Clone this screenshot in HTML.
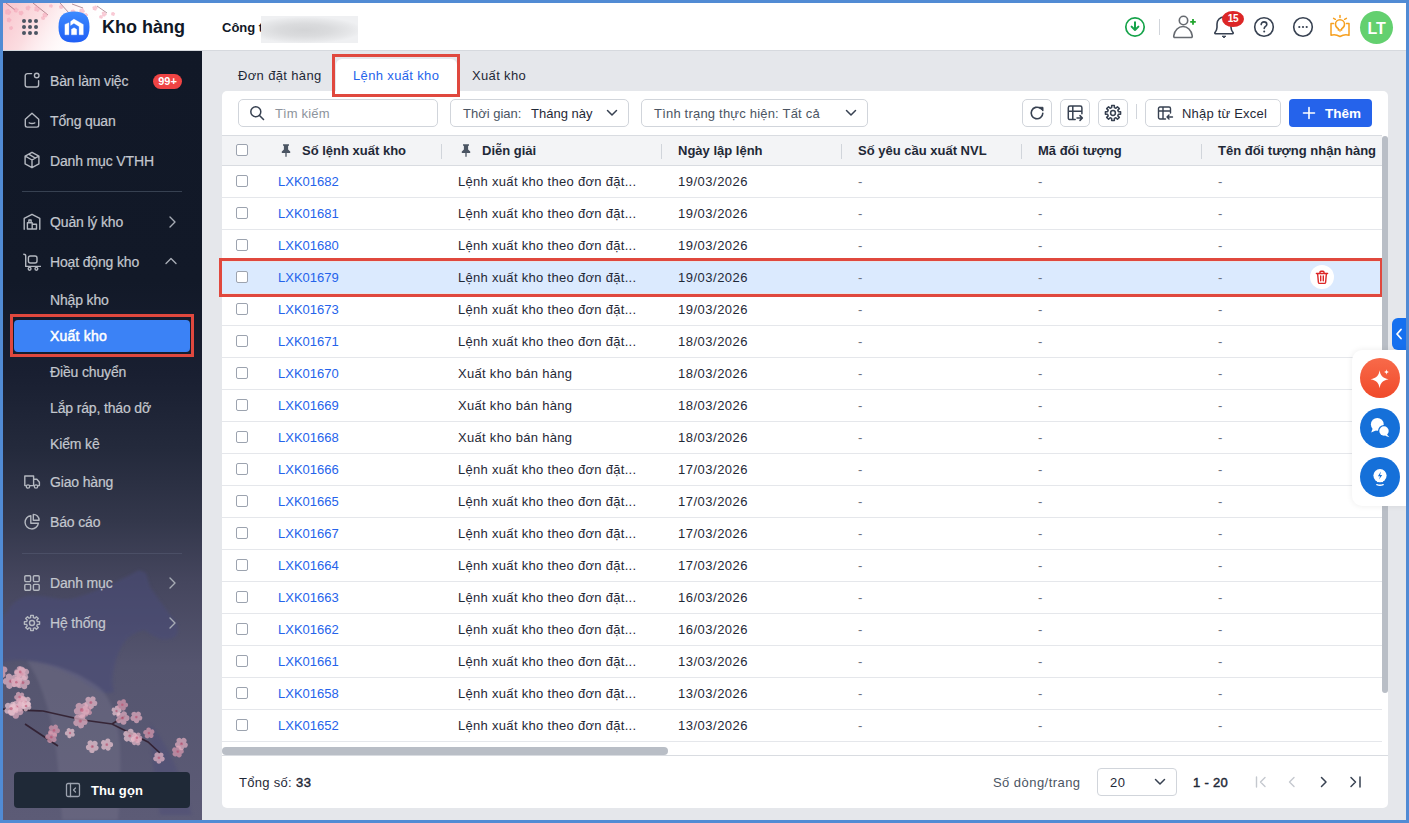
<!DOCTYPE html>
<html><head><meta charset="utf-8">
<style>
*{box-sizing:border-box;margin:0;padding:0}
html,body{width:1409px;height:823px;overflow:hidden;background:#518bd4;font-family:"Liberation Sans",sans-serif;position:relative}
.a{position:absolute;white-space:nowrap}
#header{position:absolute;left:3px;top:3px;width:1403px;height:48px;background:#fff;border-bottom:1px solid #d6d9de;overflow:hidden}
#sidebar{position:absolute;left:3px;top:51px;width:199px;height:769px;background:linear-gradient(180deg,#111827 0%,#121928 30%,#191f31 42%,#242a3c 52%,#33374b 61%,#45465e 69%,#55556f 80%,#5c5b76 100%);overflow:hidden}
#content{position:absolute;left:202px;top:51px;width:1204px;height:769px;background:#e5e7eb}
.mi{position:absolute;left:47px;color:#c3c7ce;font-size:14px;white-space:nowrap;line-height:16px;letter-spacing:-.15px;-webkit-text-stroke:.2px #c3c7ce}
.ic{position:absolute;left:21px}
.card{position:absolute;left:222px;top:91px;width:1166px;height:717px;background:#fff;border-radius:5px}
.box{position:absolute;border:1px solid #d1d5db;border-radius:5px;background:#fff;height:28px;top:99px}
.tbl{position:absolute;left:222px;top:135px;width:1160px;height:607px;overflow:hidden}
.th{position:absolute;left:0;top:0;width:1160px;height:31px;background:#f3f4f6;border-top:1px solid #d9dce1;border-bottom:1px solid #d9dce1}
.th .c{position:absolute;top:7px;font-size:13px;font-weight:bold;color:#1f2937;white-space:nowrap}
.th .sep{position:absolute;top:8px;width:1px;height:15px;background:#d1d5db}
.row{position:absolute;left:222px;width:1160px;height:32px;border-bottom:1px solid #e5e7eb;font-size:13px;color:#1f2937;background:#fff}
.row.hl{background:#dbeafe}
.row .c{position:absolute;top:8px;white-space:nowrap;line-height:16px}
.row .d{color:#6b7280}
.cb{position:absolute;left:14px;top:9px;width:12px;height:12px;border:1px solid #9ca3af;border-radius:2px;background:#fff}
.lnk{color:#2563eb}
.trash{position:absolute;left:1088px;top:3px;width:24px;height:24px;border-radius:50%;background:#fff}
.trash svg{position:absolute;left:5px;top:5px}
.tab{font-size:13px;color:#1f2937;line-height:16px;letter-spacing:0.35px}
.ph{font-size:13px;line-height:16px}
.ft{font-size:13px;line-height:16px;color:#1f2937}
.ft b{font-weight:bold}
.ds{letter-spacing:.3px}
.dt{letter-spacing:.5px}

</style></head><body>
<div id="header">
  <svg class="a" style="left:0;top:0" width="130" height="47" viewBox="0 0 130 47">
    <defs>
      <linearGradient id="pk" gradientUnits="userSpaceOnUse" x1="0" y1="0" x2="78" y2="47"><stop offset="0" stop-color="#f8c4cc"/><stop offset="0.4" stop-color="#fbdde1"/><stop offset="1" stop-color="#fff" stop-opacity="0"/></linearGradient>
    </defs>
    <rect x="0" y="0" width="130" height="47" fill="url(#pk)"/>
    <path d="M3 0 L12 7 M30 0 L45 12 M57 0 L66 10 M69 1 L80 5 M94 3 L104 10" stroke="#6b2c3c" stroke-width="0.9" fill="none" opacity="0.55"/>
    <g fill="#f4a6b8" opacity="0.6"><circle cx="5.2" cy="7.3" r="1.5"/><circle cx="6.8" cy="8.9" r="1.5"/><circle cx="5.7" cy="10.6" r="1.5"/><circle cx="3.6" cy="10.0" r="1.5"/><circle cx="3.6" cy="7.9" r="1.5"/></g><g fill="#f4a6b8" opacity="0.6"><circle cx="13.0" cy="5.6" r="1.2"/><circle cx="14.4" cy="6.6" r="1.2"/><circle cx="13.3" cy="8.4" r="1.2"/><circle cx="12.0" cy="8.0" r="1.2"/><circle cx="11.7" cy="6.4" r="1.2"/></g><g fill="#f4a6b8" opacity="0.6"><circle cx="18.7" cy="8.9" r="1.2"/><circle cx="19.3" cy="9.9" r="1.2"/><circle cx="18.2" cy="11.3" r="1.2"/><circle cx="17.0" cy="10.8" r="1.2"/><circle cx="16.9" cy="9.2" r="1.2"/></g><g fill="#f4a6b8" opacity="0.6"><circle cx="6.1" cy="15.7" r="1.2"/><circle cx="7.3" cy="17.0" r="1.2"/><circle cx="6.2" cy="18.3" r="1.2"/><circle cx="5.0" cy="17.8" r="1.2"/><circle cx="5.0" cy="16.1" r="1.2"/></g><g fill="#f4a6b8" opacity="0.6"><circle cx="25.5" cy="3.8" r="1.2"/><circle cx="26.3" cy="4.6" r="1.2"/><circle cx="25.3" cy="6.3" r="1.2"/><circle cx="23.9" cy="5.8" r="1.2"/><circle cx="23.8" cy="4.4" r="1.2"/></g><g fill="#f4a6b8" opacity="0.6"><circle cx="34.0" cy="4.4" r="1.4"/><circle cx="35.6" cy="6.2" r="1.4"/><circle cx="34.6" cy="7.5" r="1.4"/><circle cx="32.6" cy="6.9" r="1.4"/><circle cx="32.8" cy="4.8" r="1.4"/></g><g fill="#f4a6b8" opacity="0.6"><circle cx="42.5" cy="10.7" r="1.2"/><circle cx="43.4" cy="12.2" r="1.2"/><circle cx="42.6" cy="13.3" r="1.2"/><circle cx="40.8" cy="12.7" r="1.2"/><circle cx="40.8" cy="11.3" r="1.2"/></g><g fill="#f4a6b8" opacity="0.6"><circle cx="40.5" cy="14.0" r="1.0"/><circle cx="41.1" cy="15.2" r="1.0"/><circle cx="40.6" cy="15.9" r="1.0"/><circle cx="39.3" cy="15.8" r="1.0"/><circle cx="39.0" cy="14.5" r="1.0"/></g><g fill="#f4a6b8" opacity="0.6"><circle cx="8.5" cy="24.0" r="1.0"/><circle cx="9.1" cy="24.9" r="1.0"/><circle cx="8.3" cy="26.1" r="1.0"/><circle cx="7.2" cy="25.8" r="1.0"/><circle cx="7.1" cy="24.4" r="1.0"/></g><g fill="#f4a6b8" opacity="0.6"><circle cx="70.3" cy="7.6" r="1.2"/><circle cx="71.4" cy="8.8" r="1.2"/><circle cx="70.5" cy="10.4" r="1.2"/><circle cx="68.9" cy="9.9" r="1.2"/><circle cx="69.0" cy="8.0" r="1.2"/></g><g fill="#f4a6b8" opacity="0.6"><circle cx="79.5" cy="6.6" r="1.3"/><circle cx="80.5" cy="8.3" r="1.3"/><circle cx="79.3" cy="9.5" r="1.3"/><circle cx="77.6" cy="8.6" r="1.3"/><circle cx="77.8" cy="7.0" r="1.3"/></g><g fill="#f4a6b8" opacity="0.6"><circle cx="83.1" cy="10.9" r="1.0"/><circle cx="84.1" cy="12.1" r="1.0"/><circle cx="83.1" cy="13.1" r="1.0"/><circle cx="82.0" cy="12.5" r="1.0"/><circle cx="82.1" cy="11.4" r="1.0"/></g><g fill="#f4a6b8" opacity="0.6"><circle cx="92.5" cy="3.7" r="1.2"/><circle cx="93.4" cy="4.7" r="1.2"/><circle cx="92.3" cy="6.4" r="1.2"/><circle cx="90.9" cy="5.9" r="1.2"/><circle cx="90.7" cy="4.4" r="1.2"/></g><g fill="#f4a6b8" opacity="0.6"><circle cx="101.0" cy="9.6" r="1.2"/><circle cx="102.4" cy="11.2" r="1.2"/><circle cx="101.2" cy="12.4" r="1.2"/><circle cx="100.1" cy="12.1" r="1.2"/><circle cx="99.9" cy="10.0" r="1.2"/></g><g fill="#f4a6b8" opacity="0.6"><circle cx="110.2" cy="9.9" r="1.0"/><circle cx="111.1" cy="10.7" r="1.0"/><circle cx="110.5" cy="12.0" r="1.0"/><circle cx="109.1" cy="11.6" r="1.0"/><circle cx="109.2" cy="10.2" r="1.0"/></g><g fill="#f4a6b8" opacity="0.6"><circle cx="98.0" cy="13.0" r="0.9"/><circle cx="99.0" cy="14.0" r="0.9"/><circle cx="98.6" cy="14.8" r="0.9"/><circle cx="97.2" cy="14.5" r="0.9"/><circle cx="97.1" cy="13.5" r="0.9"/></g><g fill="#f4a6b8" opacity="0.6"><circle cx="72.5" cy="13.0" r="1.0"/><circle cx="73.1" cy="14.2" r="1.0"/><circle cx="72.4" cy="15.0" r="1.0"/><circle cx="71.0" cy="14.4" r="1.0"/><circle cx="71.0" cy="13.5" r="1.0"/></g><g fill="#f4a6b8" opacity="0.6"><circle cx="58.0" cy="2.9" r="1.0"/><circle cx="59.1" cy="4.0" r="1.0"/><circle cx="58.6" cy="4.9" r="1.0"/><circle cx="57.3" cy="4.8" r="1.0"/><circle cx="57.0" cy="3.4" r="1.0"/></g><g fill="#f4a6b8" opacity="0.6"><circle cx="48.3" cy="2.1" r="0.9"/><circle cx="49.0" cy="2.8" r="0.9"/><circle cx="48.6" cy="3.8" r="0.9"/><circle cx="47.1" cy="3.5" r="0.9"/><circle cx="47.1" cy="2.5" r="0.9"/></g>
  </svg>
  <svg class="a" style="left:19px;top:16px" width="18" height="18" viewBox="0 0 18 18"><g fill="#4b5563"><circle cx="2" cy="2" r="2"/><circle cx="8" cy="2" r="2"/><circle cx="14" cy="2" r="2"/><circle cx="2" cy="8" r="2"/><circle cx="8" cy="8" r="2"/><circle cx="14" cy="8" r="2"/><circle cx="2" cy="14" r="2"/><circle cx="8" cy="14" r="2"/><circle cx="14" cy="14" r="2"/></g></svg>
  <svg class="a" style="left:55px;top:8px" width="32" height="32" viewBox="0 0 32 32">
    <defs><linearGradient id="lg" x1="0" y1="0" x2="0" y2="1"><stop offset="0" stop-color="#3d8bff"/><stop offset="1" stop-color="#1f5ef5"/></linearGradient></defs>
    <path d="M16 0.5C27 0.5 31.5 5 31.5 16S27 31.5 16 31.5 0.5 27 0.5 16 5 0.5 16 0.5Z" fill="url(#lg)"/>
    <path d="M6.9 13.4l4-1.7v12.1h-4z M12.6 10.6l3.3-2.5 9.4 5.3v10.4h-4.2v-8.4l-5.2-3.2-3.3 2.2z M13.4 18.3l2.65-1.6 2.65 1.6v5.5h-5.3z" fill="#fff" stroke="#fff" stroke-width="0.3" stroke-linejoin="round"/>
  </svg>
  <span class="a" style="left:99px;top:13px;font-size:18px;font-weight:bold;color:#111827;line-height:22px">Kho hàng</span>
  <span class="a" style="left:219px;top:17px;font-size:13px;font-weight:bold;color:#111827;line-height:16px">Công t</span>
  <div class="a" style="left:258px;top:13px;width:97px;height:27px;background:radial-gradient(ellipse 60% 50% at 45% 52%,#d3d4d6 0%,#dadbdd 45%,#e6e7e9 80%,#eff0f2 100%)"></div>
  <!-- right icons -->
  <svg class="a" style="left:1121px;top:13px" width="22" height="22" viewBox="0 0 22 22"><circle cx="11" cy="11" r="9.2" fill="none" stroke="#16a34a" stroke-width="1.7"/><path d="M11 6.3v7.6M7.6 10.6L11 14l3.4-3.4" fill="none" stroke="#16a34a" stroke-width="2" stroke-linecap="round" stroke-linejoin="round"/></svg>
  <div class="a" style="left:1156px;top:16px;width:1px;height:16px;background:#d1d5db"></div>
  <svg class="a" style="left:1164px;top:8px" width="30" height="28" viewBox="0 0 30 28"><circle cx="16.5" cy="9.5" r="4.2" fill="none" stroke="#666a70" stroke-width="1.6"/><path d="M8 26.5C7 26.5 6.5 25.7 6.8 24.6 7.7 19.2 11.5 15.5 16 15.5s8.3 3.7 9.2 9.1c.3 1.1-.2 1.9-1.2 1.9z" fill="none" stroke="#666a70" stroke-width="1.6"/><path d="M26 8.1v5.6M23.2 10.9h5.6" stroke="#22a52e" stroke-width="1.8"/></svg>
  <svg class="a" style="left:1209px;top:11px" width="24" height="26" viewBox="0 0 24 26"><path d="M3.5 19.7C2.8 19.7 2.5 19 3 18.4 4.3 16.9 5 15.6 5 13.3V10C5 6.1 8 3 12 3s7 3.1 7 7v3.3c0 2.3.7 3.6 2 5.1.5.6.2 1.3-.5 1.3z" fill="none" stroke="#374151" stroke-width="1.6" stroke-linejoin="round"/><path d="M10.2 22.2h3.6L12 23.8z" fill="#374151" stroke="#374151" stroke-width="1" stroke-linejoin="round"/></svg>
  <div class="a" style="left:1219px;top:8px;width:22px;height:16px;border-radius:50%;background:#dc2626;color:#fff;font-size:10px;line-height:16px;text-align:center;font-weight:bold;letter-spacing:-.3px">15</div>
  <svg class="a" style="left:1250px;top:13px" width="22" height="22" viewBox="0 0 22 22"><circle cx="11" cy="11" r="9.3" fill="none" stroke="#374151" stroke-width="1.6"/><path d="M8.2 8.6c0-1.6 1.3-2.7 2.8-2.7s2.8 1 2.8 2.5c0 1.9-2.6 2.1-2.6 4.1" fill="none" stroke="#374151" stroke-width="1.6" stroke-linecap="round"/><circle cx="11.2" cy="15.6" r="1" fill="#374151"/></svg>
  <svg class="a" style="left:1289px;top:13px" width="22" height="22" viewBox="0 0 22 22"><circle cx="11" cy="11" r="9.3" fill="none" stroke="#374151" stroke-width="1.6"/><circle cx="7.3" cy="11" r="1.1" fill="#374151"/><circle cx="11" cy="11" r="1.1" fill="#374151"/><circle cx="14.7" cy="11" r="1.1" fill="#374151"/></svg>
  <svg class="a" style="left:1325px;top:11px" width="24" height="26" viewBox="0 0 24 26"><g fill="none" stroke="#f6a020" stroke-width="1.5" stroke-linecap="round" stroke-linejoin="round"><path d="M12 1.4v2M5.6 4.3l1.8 1M18.4 4.3l-1.8 1"/><path d="M10.3 15.9V14.6C8.6 13.9 7.5 12.2 7.5 10.3 7.5 7.8 9.5 5.8 12 5.8s4.5 2 4.5 4.5c0 1.9-1.1 3.6-2.8 4.3v1.3z"/><path d="M5.6 9.4H3V21.2c3.1-.9 6.1-.4 9 1.3 2.9-1.7 5.9-2.2 9-1.3V9.4h-2.6"/></g><path d="M11 17.2h2l-1 1z" fill="#f6a020"/></svg>
  <div class="a" style="left:1357px;top:8px;width:33px;height:33px;border-radius:50%;background:#63d06f;color:#fff;font-size:16px;font-weight:bold;text-align:center;line-height:35px;letter-spacing:-.3px">LT</div>
</div>

<div id="sidebar">
  <svg class="a" style="left:0;top:380px" width="199" height="389" viewBox="0 0 199 389">
    <defs><filter id="bl" x="-20%" y="-20%" width="140%" height="140%"><feGaussianBlur stdDeviation="1.5"/></filter></defs>
    <path d="M -3.0 193.0 C 5.0 177.0 12.0 167.0 25.0 165.0 C 42.0 163.0 57.0 171.0 72.0 167.0 C 92.0 161.0 112.0 151.0 125.0 145.0 L 136.0 139.0 L 143.0 142.0 L 147.0 156.0 C 155.0 167.0 162.0 177.0 168.0 185.0 C 172.0 189.0 175.0 193.0 175.0 197.0 C 175.0 203.0 173.0 206.0 170.0 207.0 C 165.0 209.0 160.0 209.0 157.0 208.0 C 149.0 205.0 145.0 201.0 141.0 199.0 C 133.0 201.0 127.0 205.0 123.0 209.0 C 117.0 217.0 113.0 227.0 111.0 237.0 C 109.0 245.0 109.0 253.0 111.0 261.0 C 102.0 265.0 92.0 259.0 77.0 249.0 C 57.0 237.0 37.0 231.0 17.0 229.0 C 7.0 229.0 0.0 231.0 -3.0 233.0 Z" fill="#4a4c78" opacity="0.55" filter="url(#bl)"/>
    <path d="M 24.0 230.0 C 47.0 231.0 77.0 241.0 97.0 257.0 C 109.0 269.0 115.0 289.0 117.0 314.0 C 118.0 339.0 117.0 369.0 115.0 389.0 L 59.0 389.0 C 57.0 359.0 55.0 329.0 51.0 304.0 C 45.0 274.0 37.0 249.0 24.0 230.0 Z" fill="#77758c" opacity="0.38" filter="url(#bl)"/>
    <path d="M 147.0 293.0 C 162.0 309.0 177.0 339.0 189.0 384.0 L 157.0 384.0 C 152.0 349.0 147.0 319.0 147.0 293.0 Z" fill="#4b4c78" opacity="0.4" filter="url(#bl)"/>
    <path d="M -3.0 278.0 C 17.0 279.0 32.0 280.0 40.0 280.0 L 80.0 289.0 L 109.0 293.0 L 145.0 311.0 L 157.0 322.0 M 22.0 293.0 L 55.0 315.0 M 109.0 293.0 L 122.0 285.0" stroke="#2a1626" stroke-width="1.6" fill="none" opacity="0.8"/>
    <g fill="#e6b8c8" opacity="0.72"><ellipse cx="11.2" cy="252.4" rx="3.7" ry="3.3" transform="rotate(33 11.2 252.4)"/><ellipse cx="6.6" cy="254.2" rx="3.7" ry="3.3" transform="rotate(105 6.6 254.2)"/><ellipse cx="3.5" cy="250.4" rx="3.7" ry="3.3" transform="rotate(177 3.5 250.4)"/><ellipse cx="6.2" cy="246.3" rx="3.7" ry="3.3" transform="rotate(249 6.2 246.3)"/><ellipse cx="10.9" cy="247.5" rx="3.7" ry="3.3" transform="rotate(321 10.9 247.5)"/></g><circle cx="7.7" cy="250.2" r="1.8" fill="#c0506f" opacity="0.6"/><g fill="#e6b8c8" opacity="0.72"><ellipse cx="21.7" cy="245.7" rx="3.6" ry="3.2" transform="rotate(45 21.7 245.7)"/><ellipse cx="17.1" cy="246.4" rx="3.6" ry="3.2" transform="rotate(117 17.1 246.4)"/><ellipse cx="15.0" cy="242.3" rx="3.6" ry="3.2" transform="rotate(189 15.0 242.3)"/><ellipse cx="18.3" cy="239.0" rx="3.6" ry="3.2" transform="rotate(261 18.3 239.0)"/><ellipse cx="22.5" cy="241.1" rx="3.6" ry="3.2" transform="rotate(333 22.5 241.1)"/></g><circle cx="18.9" cy="242.9" r="1.7" fill="#c0506f" opacity="0.6"/><g fill="#e2aec0" opacity="0.72"><ellipse cx="19.7" cy="243.1" rx="2.9" ry="2.6" transform="rotate(39 19.7 243.1)"/><ellipse cx="16.1" cy="244.0" rx="2.9" ry="2.6" transform="rotate(111 16.1 244.0)"/><ellipse cx="14.0" cy="240.9" rx="2.9" ry="2.6" transform="rotate(183 14.0 240.9)"/><ellipse cx="16.4" cy="238.0" rx="2.9" ry="2.6" transform="rotate(255 16.4 238.0)"/><ellipse cx="19.9" cy="239.3" rx="2.9" ry="2.6" transform="rotate(327 19.9 239.3)"/></g><circle cx="17.2" cy="241.0" r="1.4" fill="#c0506f" opacity="0.6"/><g fill="#e6b8c8" opacity="0.72"><ellipse cx="21.2" cy="255.0" rx="3.3" ry="2.9" transform="rotate(69 21.2 255.0)"/><ellipse cx="17.1" cy="253.9" rx="3.3" ry="2.9" transform="rotate(141 17.1 253.9)"/><ellipse cx="16.9" cy="249.6" rx="3.3" ry="2.9" transform="rotate(213 16.9 249.6)"/><ellipse cx="20.9" cy="248.1" rx="3.3" ry="2.9" transform="rotate(285 20.9 248.1)"/><ellipse cx="23.6" cy="251.5" rx="3.3" ry="2.9" transform="rotate(357 23.6 251.5)"/></g><circle cx="19.9" cy="251.6" r="1.6" fill="#c0506f" opacity="0.6"/><g fill="#e2aec0" opacity="0.72"><ellipse cx="14.8" cy="253.8" rx="2.7" ry="2.4" transform="rotate(60 14.8 253.8)"/><ellipse cx="11.3" cy="253.5" rx="2.7" ry="2.4" transform="rotate(132 11.3 253.5)"/><ellipse cx="10.6" cy="250.1" rx="2.7" ry="2.4" transform="rotate(204 10.6 250.1)"/><ellipse cx="13.6" cy="248.3" rx="2.7" ry="2.4" transform="rotate(276 13.6 248.3)"/><ellipse cx="16.2" cy="250.6" rx="2.7" ry="2.4" transform="rotate(348 16.2 250.6)"/></g><circle cx="13.3" cy="251.3" r="1.3" fill="#c0506f" opacity="0.6"/><g fill="#e2aec0" opacity="0.72"><ellipse cx="-1.0" cy="243.3" rx="3.7" ry="3.3" transform="rotate(56 -1.0 243.3)"/><ellipse cx="-5.7" cy="243.1" rx="3.7" ry="3.3" transform="rotate(128 -5.7 243.1)"/><ellipse cx="-7.1" cy="238.5" rx="3.7" ry="3.3" transform="rotate(200 -7.1 238.5)"/><ellipse cx="-3.1" cy="235.8" rx="3.7" ry="3.3" transform="rotate(272 -3.1 235.8)"/><ellipse cx="0.7" cy="238.8" rx="3.7" ry="3.3" transform="rotate(344 0.7 238.8)"/></g><circle cx="-3.2" cy="239.9" r="1.8" fill="#c0506f" opacity="0.6"/><g fill="#d99bb0" opacity="0.72"><ellipse cx="20.6" cy="272.5" rx="2.7" ry="2.4" transform="rotate(46 20.6 272.5)"/><ellipse cx="17.1" cy="273.0" rx="2.7" ry="2.4" transform="rotate(118 17.1 273.0)"/><ellipse cx="15.5" cy="269.7" rx="2.7" ry="2.4" transform="rotate(190 15.5 269.7)"/><ellipse cx="18.1" cy="267.3" rx="2.7" ry="2.4" transform="rotate(262 18.1 267.3)"/><ellipse cx="21.3" cy="268.9" rx="2.7" ry="2.4" transform="rotate(334 21.3 268.9)"/></g><circle cx="18.5" cy="270.3" r="1.3" fill="#c0506f" opacity="0.6"/><g fill="#ecc6d2" opacity="0.72"><ellipse cx="25.0" cy="273.0" rx="3.1" ry="2.7" transform="rotate(29 25.0 273.0)"/><ellipse cx="21.3" cy="274.6" rx="3.1" ry="2.7" transform="rotate(101 21.3 274.6)"/><ellipse cx="18.6" cy="271.7" rx="3.1" ry="2.7" transform="rotate(173 18.6 271.7)"/><ellipse cx="20.6" cy="268.2" rx="3.1" ry="2.7" transform="rotate(245 20.6 268.2)"/><ellipse cx="24.5" cy="268.9" rx="3.1" ry="2.7" transform="rotate(317 24.5 268.9)"/></g><circle cx="22.0" cy="271.3" r="1.5" fill="#c0506f" opacity="0.6"/><g fill="#ecc6d2" opacity="0.72"><ellipse cx="25.7" cy="276.2" rx="2.6" ry="2.3" transform="rotate(23 25.7 276.2)"/><ellipse cx="22.8" cy="277.9" rx="2.6" ry="2.3" transform="rotate(95 22.8 277.9)"/><ellipse cx="20.2" cy="275.7" rx="2.6" ry="2.3" transform="rotate(167 20.2 275.7)"/><ellipse cx="21.5" cy="272.6" rx="2.6" ry="2.3" transform="rotate(239 21.5 272.6)"/><ellipse cx="24.9" cy="272.9" rx="2.6" ry="2.3" transform="rotate(311 24.9 272.9)"/></g><circle cx="23.0" cy="275.0" r="1.3" fill="#c0506f" opacity="0.6"/><g fill="#e2aec0" opacity="0.72"><ellipse cx="19.1" cy="267.4" rx="2.6" ry="2.3" transform="rotate(29 19.1 267.4)"/><ellipse cx="16.1" cy="268.9" rx="2.6" ry="2.3" transform="rotate(101 16.1 268.9)"/><ellipse cx="13.8" cy="266.4" rx="2.6" ry="2.3" transform="rotate(173 13.8 266.4)"/><ellipse cx="15.4" cy="263.5" rx="2.6" ry="2.3" transform="rotate(245 15.4 263.5)"/><ellipse cx="18.7" cy="264.1" rx="2.6" ry="2.3" transform="rotate(317 18.7 264.1)"/></g><circle cx="16.6" cy="266.0" r="1.3" fill="#c0506f" opacity="0.6"/><g fill="#e2aec0" opacity="0.72"><ellipse cx="16.6" cy="280.8" rx="3.8" ry="3.3" transform="rotate(15 16.6 280.8)"/><ellipse cx="12.7" cy="283.9" rx="3.8" ry="3.3" transform="rotate(87 12.7 283.9)"/><ellipse cx="8.6" cy="281.2" rx="3.8" ry="3.3" transform="rotate(159 8.6 281.2)"/><ellipse cx="9.9" cy="276.5" rx="3.8" ry="3.3" transform="rotate(231 9.9 276.5)"/><ellipse cx="14.8" cy="276.2" rx="3.8" ry="3.3" transform="rotate(303 14.8 276.2)"/></g><circle cx="12.5" cy="279.7" r="1.8" fill="#c0506f" opacity="0.6"/><g fill="#e6b8c8" opacity="0.72"><ellipse cx="16.7" cy="277.7" rx="3.0" ry="2.7" transform="rotate(30 16.7 277.7)"/><ellipse cx="13.1" cy="279.2" rx="3.0" ry="2.7" transform="rotate(102 13.1 279.2)"/><ellipse cx="10.5" cy="276.3" rx="3.0" ry="2.7" transform="rotate(174 10.5 276.3)"/><ellipse cx="12.5" cy="273.0" rx="3.0" ry="2.7" transform="rotate(246 12.5 273.0)"/><ellipse cx="16.3" cy="273.8" rx="3.0" ry="2.7" transform="rotate(318 16.3 273.8)"/></g><circle cx="13.8" cy="276.0" r="1.5" fill="#c0506f" opacity="0.6"/><g fill="#ecc6d2" opacity="0.72"><ellipse cx="11.8" cy="278.0" rx="3.4" ry="3.0" transform="rotate(6 11.8 278.0)"/><ellipse cx="8.8" cy="281.3" rx="3.4" ry="3.0" transform="rotate(78 8.8 281.3)"/><ellipse cx="4.8" cy="279.5" rx="3.4" ry="3.0" transform="rotate(150 4.8 279.5)"/><ellipse cx="5.3" cy="275.1" rx="3.4" ry="3.0" transform="rotate(222 5.3 275.1)"/><ellipse cx="9.6" cy="274.2" rx="3.4" ry="3.0" transform="rotate(294 9.6 274.2)"/></g><circle cx="8.1" cy="277.6" r="1.7" fill="#c0506f" opacity="0.6"/><g fill="#e2aec0" opacity="0.72"><ellipse cx="81.1" cy="290.8" rx="3.5" ry="3.1" transform="rotate(10 81.1 290.8)"/><ellipse cx="77.9" cy="293.9" rx="3.5" ry="3.1" transform="rotate(82 77.9 293.9)"/><ellipse cx="73.8" cy="291.8" rx="3.5" ry="3.1" transform="rotate(154 73.8 291.8)"/><ellipse cx="74.6" cy="287.3" rx="3.5" ry="3.1" transform="rotate(226 74.6 287.3)"/><ellipse cx="79.1" cy="286.7" rx="3.5" ry="3.1" transform="rotate(298 79.1 286.7)"/></g><circle cx="77.3" cy="290.1" r="1.7" fill="#c0506f" opacity="0.6"/><g fill="#e6b8c8" opacity="0.72"><ellipse cx="91.2" cy="272.2" rx="3.1" ry="2.8" transform="rotate(13 91.2 272.2)"/><ellipse cx="88.1" cy="274.8" rx="3.1" ry="2.8" transform="rotate(85 88.1 274.8)"/><ellipse cx="84.6" cy="272.8" rx="3.1" ry="2.8" transform="rotate(157 84.6 272.8)"/><ellipse cx="85.5" cy="268.8" rx="3.1" ry="2.8" transform="rotate(229 85.5 268.8)"/><ellipse cx="89.6" cy="268.5" rx="3.1" ry="2.8" transform="rotate(301 89.6 268.5)"/></g><circle cx="87.8" cy="271.4" r="1.5" fill="#c0506f" opacity="0.6"/><g fill="#d99bb0" opacity="0.72"><ellipse cx="86.3" cy="281.5" rx="2.7" ry="2.4" transform="rotate(30 86.3 281.5)"/><ellipse cx="83.0" cy="282.9" rx="2.7" ry="2.4" transform="rotate(102 83.0 282.9)"/><ellipse cx="80.6" cy="280.3" rx="2.7" ry="2.4" transform="rotate(174 80.6 280.3)"/><ellipse cx="82.4" cy="277.2" rx="2.7" ry="2.4" transform="rotate(246 82.4 277.2)"/><ellipse cx="85.9" cy="277.9" rx="2.7" ry="2.4" transform="rotate(318 85.9 277.9)"/></g><circle cx="83.7" cy="280.0" r="1.3" fill="#c0506f" opacity="0.6"/><g fill="#e2aec0" opacity="0.72"><ellipse cx="82.7" cy="280.3" rx="3.8" ry="3.4" transform="rotate(19 82.7 280.3)"/><ellipse cx="78.6" cy="283.2" rx="3.8" ry="3.4" transform="rotate(91 78.6 283.2)"/><ellipse cx="74.7" cy="280.1" rx="3.8" ry="3.4" transform="rotate(163 74.7 280.1)"/><ellipse cx="76.3" cy="275.5" rx="3.8" ry="3.4" transform="rotate(235 76.3 275.5)"/><ellipse cx="81.3" cy="275.6" rx="3.8" ry="3.4" transform="rotate(307 81.3 275.6)"/></g><circle cx="78.7" cy="278.9" r="1.9" fill="#c0506f" opacity="0.6"/><g fill="#e2aec0" opacity="0.72"><ellipse cx="136.4" cy="286.9" rx="2.9" ry="2.6" transform="rotate(15 136.4 286.9)"/><ellipse cx="133.5" cy="289.3" rx="2.9" ry="2.6" transform="rotate(87 133.5 289.3)"/><ellipse cx="130.3" cy="287.2" rx="2.9" ry="2.6" transform="rotate(159 130.3 287.2)"/><ellipse cx="131.3" cy="283.6" rx="2.9" ry="2.6" transform="rotate(231 131.3 283.6)"/><ellipse cx="135.1" cy="283.4" rx="2.9" ry="2.6" transform="rotate(303 135.1 283.4)"/></g><circle cx="133.3" cy="286.1" r="1.4" fill="#c0506f" opacity="0.6"/><g fill="#e2aec0" opacity="0.72"><ellipse cx="123.2" cy="287.1" rx="3.3" ry="3.0" transform="rotate(3 123.2 287.1)"/><ellipse cx="120.4" cy="290.5" rx="3.3" ry="3.0" transform="rotate(75 120.4 290.5)"/><ellipse cx="116.3" cy="289.0" rx="3.3" ry="3.0" transform="rotate(147 116.3 289.0)"/><ellipse cx="116.6" cy="284.6" rx="3.3" ry="3.0" transform="rotate(219 116.6 284.6)"/><ellipse cx="120.8" cy="283.5" rx="3.3" ry="3.0" transform="rotate(291 120.8 283.5)"/></g><circle cx="119.5" cy="287.0" r="1.6" fill="#c0506f" opacity="0.6"/><g fill="#ecc6d2" opacity="0.72"><ellipse cx="114.9" cy="282.4" rx="2.5" ry="2.2" transform="rotate(60 114.9 282.4)"/><ellipse cx="111.7" cy="282.1" rx="2.5" ry="2.2" transform="rotate(132 111.7 282.1)"/><ellipse cx="111.0" cy="278.9" rx="2.5" ry="2.2" transform="rotate(204 111.0 278.9)"/><ellipse cx="113.8" cy="277.3" rx="2.5" ry="2.2" transform="rotate(276 113.8 277.3)"/><ellipse cx="116.2" cy="279.4" rx="2.5" ry="2.2" transform="rotate(348 116.2 279.4)"/></g><circle cx="113.5" cy="280.0" r="1.2" fill="#c0506f" opacity="0.6"/><g fill="#d99bb0" opacity="0.72"><ellipse cx="122.3" cy="273.9" rx="2.8" ry="2.5" transform="rotate(1 122.3 273.9)"/><ellipse cx="120.2" cy="276.8" rx="2.8" ry="2.5" transform="rotate(73 120.2 276.8)"/><ellipse cx="116.8" cy="275.6" rx="2.8" ry="2.5" transform="rotate(145 116.8 275.6)"/><ellipse cx="116.8" cy="272.0" rx="2.8" ry="2.5" transform="rotate(217 116.8 272.0)"/><ellipse cx="120.3" cy="271.0" rx="2.8" ry="2.5" transform="rotate(289 120.3 271.0)"/></g><circle cx="119.3" cy="273.8" r="1.3" fill="#c0506f" opacity="0.6"/><g fill="#e6b8c8" opacity="0.72"><ellipse cx="134.8" cy="311.9" rx="2.6" ry="2.4" transform="rotate(60 134.8 311.9)"/><ellipse cx="131.4" cy="311.6" rx="2.6" ry="2.4" transform="rotate(132 131.4 311.6)"/><ellipse cx="130.6" cy="308.2" rx="2.6" ry="2.4" transform="rotate(204 130.6 308.2)"/><ellipse cx="133.6" cy="306.5" rx="2.6" ry="2.4" transform="rotate(276 133.6 306.5)"/><ellipse cx="136.2" cy="308.8" rx="2.6" ry="2.4" transform="rotate(348 136.2 308.8)"/></g><circle cx="133.3" cy="309.4" r="1.3" fill="#c0506f" opacity="0.6"/><g fill="#ecc6d2" opacity="0.72"><ellipse cx="128.3" cy="308.1" rx="3.3" ry="3.0" transform="rotate(65 128.3 308.1)"/><ellipse cx="124.1" cy="307.3" rx="3.3" ry="3.0" transform="rotate(137 124.1 307.3)"/><ellipse cx="123.6" cy="303.0" rx="3.3" ry="3.0" transform="rotate(209 123.6 303.0)"/><ellipse cx="127.5" cy="301.1" rx="3.3" ry="3.0" transform="rotate(281 127.5 301.1)"/><ellipse cx="130.5" cy="304.3" rx="3.3" ry="3.0" transform="rotate(353 130.5 304.3)"/></g><circle cx="126.8" cy="304.8" r="1.6" fill="#c0506f" opacity="0.6"/><g fill="#d99bb0" opacity="0.72"><ellipse cx="147.9" cy="304.4" rx="2.7" ry="2.4" transform="rotate(49 147.9 304.4)"/><ellipse cx="144.3" cy="304.7" rx="2.7" ry="2.4" transform="rotate(121 144.3 304.7)"/><ellipse cx="142.9" cy="301.4" rx="2.7" ry="2.4" transform="rotate(193 142.9 301.4)"/><ellipse cx="145.7" cy="299.1" rx="2.7" ry="2.4" transform="rotate(265 145.7 299.1)"/><ellipse cx="148.7" cy="300.9" rx="2.7" ry="2.4" transform="rotate(337 148.7 300.9)"/></g><circle cx="145.9" cy="302.1" r="1.3" fill="#c0506f" opacity="0.6"/><g fill="#e2aec0" opacity="0.72"><ellipse cx="136.7" cy="307.0" rx="2.6" ry="2.3" transform="rotate(7 136.7 307.0)"/><ellipse cx="134.4" cy="309.5" rx="2.6" ry="2.3" transform="rotate(79 134.4 309.5)"/><ellipse cx="131.4" cy="308.0" rx="2.6" ry="2.3" transform="rotate(151 131.4 308.0)"/><ellipse cx="131.8" cy="304.7" rx="2.6" ry="2.3" transform="rotate(223 131.8 304.7)"/><ellipse cx="135.1" cy="304.1" rx="2.6" ry="2.3" transform="rotate(295 135.1 304.1)"/></g><circle cx="133.9" cy="306.7" r="1.3" fill="#c0506f" opacity="0.6"/><g fill="#e6b8c8" opacity="0.72"><ellipse cx="158.9" cy="327.8" rx="2.8" ry="2.5" transform="rotate(19 158.9 327.8)"/><ellipse cx="155.9" cy="329.9" rx="2.8" ry="2.5" transform="rotate(91 155.9 329.9)"/><ellipse cx="153.0" cy="327.7" rx="2.8" ry="2.5" transform="rotate(163 153.0 327.7)"/><ellipse cx="154.1" cy="324.2" rx="2.8" ry="2.5" transform="rotate(235 154.1 324.2)"/><ellipse cx="157.8" cy="324.3" rx="2.8" ry="2.5" transform="rotate(307 157.8 324.3)"/></g><circle cx="155.9" cy="326.8" r="1.4" fill="#c0506f" opacity="0.6"/><g fill="#d99bb0" opacity="0.72"><ellipse cx="176.0" cy="323.6" rx="2.9" ry="2.6" transform="rotate(67 176.0 323.6)"/><ellipse cx="172.4" cy="322.7" rx="2.9" ry="2.6" transform="rotate(139 172.4 322.7)"/><ellipse cx="172.0" cy="319.0" rx="2.9" ry="2.6" transform="rotate(211 172.0 319.0)"/><ellipse cx="175.5" cy="317.5" rx="2.9" ry="2.6" transform="rotate(283 175.5 317.5)"/><ellipse cx="177.9" cy="320.3" rx="2.9" ry="2.6" transform="rotate(355 177.9 320.3)"/></g><circle cx="174.8" cy="320.6" r="1.4" fill="#c0506f" opacity="0.6"/><g fill="#e2aec0" opacity="0.72"><ellipse cx="181.7" cy="313.9" rx="3.1" ry="2.8" transform="rotate(20 181.7 313.9)"/><ellipse cx="178.3" cy="316.2" rx="3.1" ry="2.8" transform="rotate(92 178.3 316.2)"/><ellipse cx="175.1" cy="313.7" rx="3.1" ry="2.8" transform="rotate(164 175.1 313.7)"/><ellipse cx="176.5" cy="309.8" rx="3.1" ry="2.8" transform="rotate(236 176.5 309.8)"/><ellipse cx="180.6" cy="310.0" rx="3.1" ry="2.8" transform="rotate(308 180.6 310.0)"/></g><circle cx="178.5" cy="312.7" r="1.5" fill="#c0506f" opacity="0.6"/><g fill="#ecc6d2" opacity="0.72"><ellipse cx="69.4" cy="303.4" rx="2.5" ry="2.2" transform="rotate(30 69.4 303.4)"/><ellipse cx="66.5" cy="304.7" rx="2.5" ry="2.2" transform="rotate(102 66.5 304.7)"/><ellipse cx="64.3" cy="302.3" rx="2.5" ry="2.2" transform="rotate(174 64.3 302.3)"/><ellipse cx="65.9" cy="299.5" rx="2.5" ry="2.2" transform="rotate(246 65.9 299.5)"/><ellipse cx="69.1" cy="300.2" rx="2.5" ry="2.2" transform="rotate(318 69.1 300.2)"/></g><circle cx="67.0" cy="302.0" r="1.2" fill="#c0506f" opacity="0.6"/><g fill="#d99bb0" opacity="0.72"><ellipse cx="54.1" cy="299.7" rx="2.9" ry="2.5" transform="rotate(7 54.1 299.7)"/><ellipse cx="51.6" cy="302.5" rx="2.9" ry="2.5" transform="rotate(79 51.6 302.5)"/><ellipse cx="48.2" cy="300.9" rx="2.9" ry="2.5" transform="rotate(151 48.2 300.9)"/><ellipse cx="48.6" cy="297.2" rx="2.9" ry="2.5" transform="rotate(223 48.6 297.2)"/><ellipse cx="52.3" cy="296.5" rx="2.9" ry="2.5" transform="rotate(295 52.3 296.5)"/></g><circle cx="51.0" cy="299.4" r="1.4" fill="#c0506f" opacity="0.6"/><g fill="#d99bb0" opacity="0.72"><ellipse cx="50.7" cy="308.4" rx="2.9" ry="2.6" transform="rotate(42 50.7 308.4)"/><ellipse cx="47.0" cy="309.1" rx="2.9" ry="2.6" transform="rotate(114 47.0 309.1)"/><ellipse cx="45.1" cy="305.8" rx="2.9" ry="2.6" transform="rotate(186 45.1 305.8)"/><ellipse cx="47.7" cy="303.0" rx="2.9" ry="2.6" transform="rotate(258 47.7 303.0)"/><ellipse cx="51.1" cy="304.6" rx="2.9" ry="2.6" transform="rotate(330 51.1 304.6)"/></g><circle cx="48.3" cy="306.2" r="1.4" fill="#c0506f" opacity="0.6"/><g fill="#ecc6d2" opacity="0.72"><ellipse cx="104.9" cy="316.8" rx="3.0" ry="2.6" transform="rotate(69 104.9 316.8)"/><ellipse cx="101.2" cy="315.8" rx="3.0" ry="2.6" transform="rotate(141 101.2 315.8)"/><ellipse cx="101.0" cy="311.9" rx="3.0" ry="2.6" transform="rotate(213 101.0 311.9)"/><ellipse cx="104.6" cy="310.5" rx="3.0" ry="2.6" transform="rotate(285 104.6 310.5)"/><ellipse cx="107.1" cy="313.6" rx="3.0" ry="2.6" transform="rotate(357 107.1 313.6)"/></g><circle cx="103.8" cy="313.7" r="1.4" fill="#c0506f" opacity="0.6"/><g fill="#ecc6d2" opacity="0.72"><ellipse cx="92.5" cy="316.9" rx="3.1" ry="2.8" transform="rotate(23 92.5 316.9)"/><ellipse cx="89.0" cy="319.0" rx="3.1" ry="2.8" transform="rotate(95 89.0 319.0)"/><ellipse cx="86.0" cy="316.3" rx="3.1" ry="2.8" transform="rotate(167 86.0 316.3)"/><ellipse cx="87.5" cy="312.5" rx="3.1" ry="2.8" transform="rotate(239 87.5 312.5)"/><ellipse cx="91.6" cy="312.9" rx="3.1" ry="2.8" transform="rotate(311 91.6 312.9)"/></g><circle cx="89.3" cy="315.5" r="1.5" fill="#c0506f" opacity="0.6"/>
  </svg>
  <!-- menu -->
  <svg class="a" style="left:20px;top:20.4px" width="18" height="18" viewBox="0 0 18 18"><path d="M8.6 2.6H4.4C3.2 2.6 2.2 3.6 2.2 4.8V13.8C2.2 15 3.2 16 4.4 16H13.4C14.6 16 15.6 15 15.6 13.8V9.6" fill="none" stroke="#b4b8c0" stroke-width="1.4" stroke-linecap="round" stroke-linejoin="round"/><circle cx="13.7" cy="4.5" r="2.3" fill="none" stroke="#b4b8c0" stroke-width="1.4" stroke-linecap="round" stroke-linejoin="round"/></svg>
  <svg class="a" style="left:20px;top:59.75px" width="18" height="18" viewBox="0 0 18 18"><path d="M2.3 8.3L9 2.2l6.7 6.1v6c0 1-.8 1.8-1.8 1.8H4.1c-1 0-1.8-.8-1.8-1.8z" fill="none" stroke="#b4b8c0" stroke-width="1.4" stroke-linecap="round" stroke-linejoin="round"/><path d="M6.2 11.9c1.8.8 3.8.8 5.6 0" fill="none" stroke="#b4b8c0" stroke-width="1.4" stroke-linecap="round" stroke-linejoin="round"/></svg>
  <svg class="a" style="left:20px;top:99.7px" width="18" height="18" viewBox="0 0 18 18"><path d="M9 1.3l6.9 3.8v7.8L9 16.7 2.1 12.9V5.1z M2.3 5.2L9 9l6.7-3.8 M9 9v7.6 M5.6 3.2l6.8 3.9" fill="none" stroke="#b4b8c0" stroke-width="1.4" stroke-linecap="round" stroke-linejoin="round"/></svg>
  <svg class="a" style="left:20px;top:161.5px" width="18" height="18" viewBox="0 0 18 18"><path d="M1.2 16.2V5.4L9 1.3l7.8 4.1v10.8" fill="none" stroke="#b4b8c0" stroke-width="1.4" stroke-linecap="round" stroke-linejoin="round"/><path d="M4.4 16V9.8h4.8V16z M5.9 9.8V7h2.2v2.8 M9.2 16v-4.7h4.3V16z" fill="none" stroke="#b4b8c0" stroke-width="1.4" stroke-linecap="round" stroke-linejoin="round" stroke-width="1.3"/></svg>
  <svg class="a" style="left:20px;top:202px" width="18" height="18" viewBox="0 0 18 18"><path d="M0.8 1.2c1.2 0 1.9.5 1.9 1.6v10.6h15" fill="none" stroke="#b4b8c0" stroke-width="1.4" stroke-linecap="round" stroke-linejoin="round"/><rect x="5.4" y="3" width="8.6" height="7" rx="2" fill="none" stroke="#b4b8c0" stroke-width="1.4" stroke-linecap="round" stroke-linejoin="round"/><circle cx="6.6" cy="15.8" r="1.4" fill="none" stroke="#b4b8c0" stroke-width="1.4" stroke-linecap="round" stroke-linejoin="round" stroke-width="1.3"/><circle cx="13.4" cy="15.8" r="1.4" fill="none" stroke="#b4b8c0" stroke-width="1.4" stroke-linecap="round" stroke-linejoin="round" stroke-width="1.3"/></svg>
  <svg class="a" style="left:20px;top:421.9px" width="18" height="18" viewBox="0 0 18 18"><path d="M1.8 3h8.8v9.6H1.8z M10.6 6.2h3.3l2.5 3.1v3.3h-5.8" fill="none" stroke="#b4b8c0" stroke-width="1.4" stroke-linecap="round" stroke-linejoin="round"/><circle cx="5" cy="13.5" r="1.7" fill="#2b3042" stroke="#b4b8c0" stroke-width="1.3"/><circle cx="13" cy="13.5" r="1.7" fill="#2b3042" stroke="#b4b8c0" stroke-width="1.3"/></svg>
  <svg class="a" style="left:20px;top:462px" width="18" height="18" viewBox="0 0 18 18"><path d="M7.8 2.6A6.7 6.7 0 1 0 15.4 10.2H7.8z" fill="none" stroke="#b4b8c0" stroke-width="1.4" stroke-linecap="round" stroke-linejoin="round"/><path d="M10.3 1.4v5.8h5.8A5.8 5.8 0 0 0 10.3 1.4z" fill="none" stroke="#b4b8c0" stroke-width="1.4" stroke-linecap="round" stroke-linejoin="round"/></svg>
  <svg class="a" style="left:20px;top:522.9px" width="18" height="18" viewBox="0 0 18 18"><g fill="none" stroke="#b4b8c0" stroke-width="1.4" stroke-linecap="round" stroke-linejoin="round"><rect x="1.8" y="1.8" width="5.8" height="5.8" rx="1"/><rect x="10.4" y="1.8" width="5.8" height="5.8" rx="1"/><rect x="1.8" y="10.4" width="5.8" height="5.8" rx="1"/><rect x="10.4" y="10.4" width="5.8" height="5.8" rx="1"/></g></svg>
  <svg class="a" style="left:20px;top:563px" width="18" height="18" viewBox="0 0 18 18"><path d="M7.65 3.57 L7.65 1.42 L10.35 1.42 L10.35 3.57 L11.89 4.20 L13.40 2.68 L15.32 4.60 L13.80 6.11 L14.43 7.65 L16.58 7.65 L16.58 10.35 L14.43 10.35 L13.80 11.89 L15.32 13.40 L13.40 15.32 L11.89 13.80 L10.35 14.43 L10.35 16.58 L7.65 16.58 L7.65 14.43 L6.11 13.80 L4.60 15.32 L2.68 13.40 L4.20 11.89 L3.57 10.35 L1.42 10.35 L1.42 7.65 L3.57 7.65 L4.20 6.11 L2.68 4.60 L4.60 2.68 L6.11 4.20Z" fill="none" stroke="#b4b8c0" stroke-width="1.4" stroke-linejoin="round"/><circle cx="9" cy="9" r="2.5" fill="none" stroke="#b4b8c0" stroke-width="1.4"/></svg>
  
    <span class="mi" style="top:22px">Bàn làm việc</span>
  <div class="a" style="left:150px;top:23px;width:29px;height:15px;border-radius:8px;background:#ef4444;color:#fff;font-size:11px;font-weight:bold;line-height:15px;text-align:center">99+</div>
    <span class="mi" style="top:62px">Tổng quan</span>
    <span class="mi" style="top:102px">Danh mục VTHH</span>
  <div class="a" style="left:19px;top:140px;width:160px;height:1px;background:#374151"></div>
    <span class="mi" style="top:163px">Quản lý kho</span>
  <svg class="a" style="left:164px;top:164px" width="10" height="14" viewBox="0 0 10 14"><path d="M3 2l5 5-5 5" fill="none" stroke="#a7acb5" stroke-width="1.4" stroke-linecap="round" stroke-linejoin="round"/></svg>
    <span class="mi" style="top:203px">Hoạt động kho</span>
  <svg class="a" style="left:161px;top:205px" width="14" height="10" viewBox="0 0 14 10"><path d="M2 7.5l5-5 5 5" fill="none" stroke="#a7acb5" stroke-width="1.4" stroke-linecap="round" stroke-linejoin="round"/></svg>
  <span class="mi" style="top:241px">Nhập kho</span>
  <div class="a" style="left:7px;top:263px;width:184px;height:43px;border:3px solid #e0483e"></div>
  <div class="a" style="left:11px;top:269px;width:176px;height:32px;border-radius:4px;background:#3b82f6"></div>
  <span class="mi" style="top:277px;color:#fff;-webkit-text-stroke:.5px #fff;letter-spacing:.2px">Xuất kho</span>
  <span class="mi" style="top:313px">Điều chuyển</span>
  <span class="mi" style="top:349px">Lắp ráp, tháo dỡ</span>
  <span class="mi" style="top:385px">Kiểm kê</span>
    <span class="mi" style="top:423px">Giao hàng</span>
    <span class="mi" style="top:463px">Báo cáo</span>
  <div class="a" style="left:19px;top:502px;width:160px;height:1px;background:#4b4f66"></div>
    <span class="mi" style="top:524px">Danh mục</span>
  <svg class="a" style="left:164px;top:525px" width="10" height="14" viewBox="0 0 10 14"><path d="M3 2l5 5-5 5" fill="none" stroke="#a7acb5" stroke-width="1.4" stroke-linecap="round" stroke-linejoin="round"/></svg>
    <span class="mi" style="top:564px">Hệ thống</span>
  <svg class="a" style="left:164px;top:565px" width="10" height="14" viewBox="0 0 10 14"><path d="M3 2l5 5-5 5" fill="none" stroke="#a7acb5" stroke-width="1.4" stroke-linecap="round" stroke-linejoin="round"/></svg>
  <div class="a" style="left:11px;top:721px;width:176px;height:36px;border-radius:4px;background:#1f2937"></div>
  <svg class="a" style="left:62px;top:731px" width="16" height="16" viewBox="0 0 16 16"><rect x="1.5" y="1.5" width="13" height="13" rx="1.5" fill="none" stroke="#9ca3af" stroke-width="1.3"/><path d="M5.5 1.5v13M10.5 6L8.5 8l2 2" fill="none" stroke="#9ca3af" stroke-width="1.3" stroke-linecap="round" stroke-linejoin="round"/></svg>
  <span class="a" style="left:88px;top:732px;font-size:13px;font-weight:bold;color:#fff;line-height:16px;letter-spacing:.1px">Thu gọn</span>
</div>

<div id="content"></div>
<!-- tabs -->
<span class="a tab" style="left:238px;top:68px">Đơn đặt hàng</span>
<div class="a" style="left:336px;top:59px;width:121px;height:38px;background:#fff;border-radius:6px 6px 0 0"></div>
<span class="a tab" style="left:472px;top:68px">Xuất kho</span>

<div class="card"></div>
<div class="a" style="left:332px;top:54px;width:128px;height:43px;border:3px solid #e0483e"></div>
<span class="a tab" style="left:353px;top:68px;color:#2563eb">Lệnh xuất kho</span>
<!-- toolbar -->
<div class="box" style="left:238px;width:200px"></div>
<svg class="a" style="left:249px;top:105px" width="16" height="16" viewBox="0 0 16 16"><circle cx="6.8" cy="6.8" r="5" fill="none" stroke="#374151" stroke-width="1.5"/><path d="M10.5 10.5l4 4" stroke="#374151" stroke-width="1.6" stroke-linecap="round"/></svg>
<span class="a ph" style="left:275px;top:106px;color:#8d939c;letter-spacing:.15px">Tìm kiếm</span>
<div class="box" style="left:450px;width:179px"></div>
<span class="a ph" style="left:463px;top:106px;color:#4b5563">Thời gian:</span>
<span class="a ph" style="left:531px;top:106px;color:#1f2937">Tháng này</span>
<svg class="a" style="left:605px;top:107px" width="14" height="12" viewBox="0 0 14 12"><path d="M2.5 3.5L7 8l4.5-4.5" fill="none" stroke="#374151" stroke-width="1.5" stroke-linecap="round" stroke-linejoin="round"/></svg>
<div class="box" style="left:641px;width:227px"></div>
<span class="a ph" style="left:654px;top:106px;color:#4b5563;letter-spacing:.2px">Tình trạng thực hiện: Tất cả</span>
<svg class="a" style="left:844px;top:107px" width="14" height="12" viewBox="0 0 14 12"><path d="M2.5 3.5L7 8l4.5-4.5" fill="none" stroke="#374151" stroke-width="1.5" stroke-linecap="round" stroke-linejoin="round"/></svg>

<div class="box" style="left:1022px;width:30px"></div>
<svg class="a" style="left:1028px;top:104px" width="18" height="18" viewBox="0 0 18 18"><path d="M14.8 9.2A5.8 5.8 0 1 1 12.4 4.3" fill="none" stroke="#374151" stroke-width="1.6" stroke-linecap="round"/><path d="M11.2 3.3H15V7.1Z" fill="#374151" stroke="#374151" stroke-width="1" stroke-linejoin="round"/></svg>
<div class="box" style="left:1060px;width:30px"></div>
<svg class="a" style="left:1066px;top:104px" width="18" height="18" viewBox="0 0 18 18"><path d="M9.2 15.6H4C3 15.6 2.3 14.9 2.3 13.9V3.8C2.3 2.8 3 2.1 4 2.1h10.2c1 0 1.7.7 1.7 1.7V9.8 M2.3 7.3h13.6 M6.8 2.1v13.5" fill="none" stroke="#374151" stroke-width="1.5" stroke-linecap="round"/><path d="M11 14h5.3M14 11.6l2.4 2.4-2.4 2.4" fill="none" stroke="#374151" stroke-width="1.5" stroke-linecap="round" stroke-linejoin="round"/></svg>
<div class="box" style="left:1098px;width:30px"></div>
<svg class="a" style="left:1104px;top:104px" width="18" height="18" viewBox="0 0 18 18"><path d="M7.65 3.57 L7.65 1.42 L10.35 1.42 L10.35 3.57 L11.89 4.20 L13.40 2.68 L15.32 4.60 L13.80 6.11 L14.43 7.65 L16.58 7.65 L16.58 10.35 L14.43 10.35 L13.80 11.89 L15.32 13.40 L13.40 15.32 L11.89 13.80 L10.35 14.43 L10.35 16.58 L7.65 16.58 L7.65 14.43 L6.11 13.80 L4.60 15.32 L2.68 13.40 L4.20 11.89 L3.57 10.35 L1.42 10.35 L1.42 7.65 L3.57 7.65 L4.20 6.11 L2.68 4.60 L4.60 2.68 L6.11 4.20Z" fill="none" stroke="#374151" stroke-width="1.5" stroke-linejoin="round"/><circle cx="9" cy="9" r="2.4" fill="none" stroke="#374151" stroke-width="1.5"/></svg>
<div class="a" style="left:1136px;top:104px;width:1px;height:15px;background:#d1d5db"></div>
<div class="box" style="left:1145px;width:136px"></div>
<svg class="a" style="left:1157px;top:105px" width="17" height="16" viewBox="0 0 17 16"><path d="M8.5 14H3c-.8 0-1.5-.7-1.5-1.5v-9C1.5 2.7 2.2 2 3 2h9c.8 0 1.5.7 1.5 1.5V8 M1.5 6h12 M6 2v12" fill="none" stroke="#374151" stroke-width="1.4" stroke-linecap="round"/><path d="M15.5 12H10M12 10l-2 2 2 2" fill="none" stroke="#374151" stroke-width="1.4" stroke-linecap="round" stroke-linejoin="round"/></svg>
<span class="a ph" style="left:1182px;top:106px;color:#1f2937;letter-spacing:.2px">Nhập từ Excel</span>
<div class="a" style="left:1289px;top:99px;width:83px;height:28px;border-radius:4px;background:#2563eb"></div>
<svg class="a" style="left:1302px;top:106px" width="14" height="14" viewBox="0 0 14 14"><path d="M7 1.5v11M1.5 7h11" stroke="#fff" stroke-width="1.6" stroke-linecap="round"/></svg>
<span class="a" style="left:1325px;top:106px;font-size:13.5px;font-weight:bold;color:#fff;line-height:16px">Thêm</span>

<div class="tbl">
  <div class="th">
    <span class="cb" style="top:8px"></span>
    <svg class="a" style="left:59px;top:8px" width="10" height="14" viewBox="0 0 10 14"><path d="M2 .3h6v1.2l-.9.5v3.6l2.1 2v1.5H.8V7.6l2.1-2V2l-.9-.5z" fill="#4b5563"/><path d="M5 9.1v3.6" stroke="#4b5563" stroke-width="1.3"/></svg>
    <span class="c" style="left:80px">Số lệnh xuất kho</span>
    <span class="sep" style="left:219px"></span>
    <svg class="a" style="left:239px;top:8px" width="10" height="14" viewBox="0 0 10 14"><path d="M2 .3h6v1.2l-.9.5v3.6l2.1 2v1.5H.8V7.6l2.1-2V2l-.9-.5z" fill="#4b5563"/><path d="M5 9.1v3.6" stroke="#4b5563" stroke-width="1.3"/></svg>
    <span class="c" style="left:260px">Diễn giải</span>
    <span class="sep" style="left:439px"></span>
    <span class="c" style="left:456px">Ngày lập lệnh</span>
    <span class="sep" style="left:619px"></span>
    <span class="c" style="left:636px">Số yêu cầu xuất NVL</span>
    <span class="sep" style="left:799px"></span>
    <span class="c" style="left:816px">Mã đối tượng</span>
    <span class="sep" style="left:979px"></span>
    <span class="c" style="left:996px">Tên đối tượng nhận hàng</span>
  </div>
</div>
<div class="row" style="top:166px"><span class="cb"></span><span class="c lnk" style="left:56px">LXK01682</span><span class="c ds" style="left:236px">Lệnh xuất kho theo đơn đặt...</span><span class="c dt" style="left:456px">19/03/2026</span><span class="c d" style="left:636px">-</span><span class="c d" style="left:816px">-</span><span class="c d" style="left:996px">-</span></div>
<div class="row" style="top:198px"><span class="cb"></span><span class="c lnk" style="left:56px">LXK01681</span><span class="c ds" style="left:236px">Lệnh xuất kho theo đơn đặt...</span><span class="c dt" style="left:456px">19/03/2026</span><span class="c d" style="left:636px">-</span><span class="c d" style="left:816px">-</span><span class="c d" style="left:996px">-</span></div>
<div class="row" style="top:230px"><span class="cb"></span><span class="c lnk" style="left:56px">LXK01680</span><span class="c ds" style="left:236px">Lệnh xuất kho theo đơn đặt...</span><span class="c dt" style="left:456px">19/03/2026</span><span class="c d" style="left:636px">-</span><span class="c d" style="left:816px">-</span><span class="c d" style="left:996px">-</span></div>
<div class="row hl" style="top:262px"><span class="cb"></span><span class="c lnk" style="left:56px">LXK01679</span><span class="c ds" style="left:236px">Lệnh xuất kho theo đơn đặt...</span><span class="c dt" style="left:456px">19/03/2026</span><span class="c d" style="left:636px">-</span><span class="c d" style="left:816px">-</span><span class="c d" style="left:996px">-</span><span class="trash"><svg width="14" height="15" viewBox="0 0 14 15"><path d="M5 3.3V2.3c0-.6.4-1 1-1h2c.6 0 1 .4 1 1v1 M1.4 3.5h11.2 M2.6 3.5l.8 8.9c.1.6.5 1 1.1 1h5c.6 0 1-.4 1.1-1l.8-8.9 M5.7 6v4.8 M8.3 6v4.8" fill="none" stroke="#dc2626" stroke-width="1.4" stroke-linejoin="round" stroke-linecap="round"/></svg></span></div>
<div class="row" style="top:294px"><span class="cb"></span><span class="c lnk" style="left:56px">LXK01673</span><span class="c ds" style="left:236px">Lệnh xuất kho theo đơn đặt...</span><span class="c dt" style="left:456px">19/03/2026</span><span class="c d" style="left:636px">-</span><span class="c d" style="left:816px">-</span><span class="c d" style="left:996px">-</span></div>
<div class="row" style="top:326px"><span class="cb"></span><span class="c lnk" style="left:56px">LXK01671</span><span class="c ds" style="left:236px">Lệnh xuất kho theo đơn đặt...</span><span class="c dt" style="left:456px">18/03/2026</span><span class="c d" style="left:636px">-</span><span class="c d" style="left:816px">-</span><span class="c d" style="left:996px">-</span></div>
<div class="row" style="top:358px"><span class="cb"></span><span class="c lnk" style="left:56px">LXK01670</span><span class="c ds" style="left:236px">Xuất kho bán hàng</span><span class="c dt" style="left:456px">18/03/2026</span><span class="c d" style="left:636px">-</span><span class="c d" style="left:816px">-</span><span class="c d" style="left:996px">-</span></div>
<div class="row" style="top:390px"><span class="cb"></span><span class="c lnk" style="left:56px">LXK01669</span><span class="c ds" style="left:236px">Xuất kho bán hàng</span><span class="c dt" style="left:456px">18/03/2026</span><span class="c d" style="left:636px">-</span><span class="c d" style="left:816px">-</span><span class="c d" style="left:996px">-</span></div>
<div class="row" style="top:422px"><span class="cb"></span><span class="c lnk" style="left:56px">LXK01668</span><span class="c ds" style="left:236px">Xuất kho bán hàng</span><span class="c dt" style="left:456px">18/03/2026</span><span class="c d" style="left:636px">-</span><span class="c d" style="left:816px">-</span><span class="c d" style="left:996px">-</span></div>
<div class="row" style="top:454px"><span class="cb"></span><span class="c lnk" style="left:56px">LXK01666</span><span class="c ds" style="left:236px">Lệnh xuất kho theo đơn đặt...</span><span class="c dt" style="left:456px">17/03/2026</span><span class="c d" style="left:636px">-</span><span class="c d" style="left:816px">-</span><span class="c d" style="left:996px">-</span></div>
<div class="row" style="top:486px"><span class="cb"></span><span class="c lnk" style="left:56px">LXK01665</span><span class="c ds" style="left:236px">Lệnh xuất kho theo đơn đặt...</span><span class="c dt" style="left:456px">17/03/2026</span><span class="c d" style="left:636px">-</span><span class="c d" style="left:816px">-</span><span class="c d" style="left:996px">-</span></div>
<div class="row" style="top:518px"><span class="cb"></span><span class="c lnk" style="left:56px">LXK01667</span><span class="c ds" style="left:236px">Lệnh xuất kho theo đơn đặt...</span><span class="c dt" style="left:456px">17/03/2026</span><span class="c d" style="left:636px">-</span><span class="c d" style="left:816px">-</span><span class="c d" style="left:996px">-</span></div>
<div class="row" style="top:550px"><span class="cb"></span><span class="c lnk" style="left:56px">LXK01664</span><span class="c ds" style="left:236px">Lệnh xuất kho theo đơn đặt...</span><span class="c dt" style="left:456px">17/03/2026</span><span class="c d" style="left:636px">-</span><span class="c d" style="left:816px">-</span><span class="c d" style="left:996px">-</span></div>
<div class="row" style="top:582px"><span class="cb"></span><span class="c lnk" style="left:56px">LXK01663</span><span class="c ds" style="left:236px">Lệnh xuất kho theo đơn đặt...</span><span class="c dt" style="left:456px">16/03/2026</span><span class="c d" style="left:636px">-</span><span class="c d" style="left:816px">-</span><span class="c d" style="left:996px">-</span></div>
<div class="row" style="top:614px"><span class="cb"></span><span class="c lnk" style="left:56px">LXK01662</span><span class="c ds" style="left:236px">Lệnh xuất kho theo đơn đặt...</span><span class="c dt" style="left:456px">16/03/2026</span><span class="c d" style="left:636px">-</span><span class="c d" style="left:816px">-</span><span class="c d" style="left:996px">-</span></div>
<div class="row" style="top:646px"><span class="cb"></span><span class="c lnk" style="left:56px">LXK01661</span><span class="c ds" style="left:236px">Lệnh xuất kho theo đơn đặt...</span><span class="c dt" style="left:456px">13/03/2026</span><span class="c d" style="left:636px">-</span><span class="c d" style="left:816px">-</span><span class="c d" style="left:996px">-</span></div>
<div class="row" style="top:678px"><span class="cb"></span><span class="c lnk" style="left:56px">LXK01658</span><span class="c ds" style="left:236px">Lệnh xuất kho theo đơn đặt...</span><span class="c dt" style="left:456px">13/03/2026</span><span class="c d" style="left:636px">-</span><span class="c d" style="left:816px">-</span><span class="c d" style="left:996px">-</span></div>
<div class="row" style="top:710px"><span class="cb"></span><span class="c lnk" style="left:56px">LXK01652</span><span class="c ds" style="left:236px">Lệnh xuất kho theo đơn đặt...</span><span class="c dt" style="left:456px">13/03/2026</span><span class="c d" style="left:636px">-</span><span class="c d" style="left:816px">-</span><span class="c d" style="left:996px">-</span></div>
<div class="a" style="left:219px;top:258px;width:1164px;height:39px;border:3px solid #e0483e"></div>
<!-- vertical scrollbar -->
<div class="a" style="left:1382px;top:135px;width:6px;height:620px;background:#fff"></div>
<div class="a" style="left:1382px;top:136px;width:6px;height:557px;border-radius:3px;background:#b9bec6"></div>
<!-- horizontal scrollbar -->
<div class="a" style="left:222px;top:747px;width:446px;height:8px;border-radius:4px;background:#b9bec6"></div>
<div class="a" style="left:222px;top:755px;width:1166px;height:1px;background:#d9dce1"></div>
<!-- footer -->
<span class="a ft" style="left:239px;top:775px;letter-spacing:.3px">Tổng số: <span style="-webkit-text-stroke:.45px #1f2937;letter-spacing:.6px">33</span></span>
<span class="a ft" style="left:993px;top:775px;color:#4b5563;letter-spacing:.45px">Số dòng/trang</span>
<div class="a" style="left:1097px;top:768px;width:80px;height:28px;border:1px solid #d1d5db;border-radius:4px;background:#fff"></div>
<span class="a ft" style="left:1110px;top:775px;letter-spacing:.4px">20</span>
<svg class="a" style="left:1153px;top:776px" width="14" height="12" viewBox="0 0 14 12"><path d="M2.5 3.5L7 8l4.5-4.5" fill="none" stroke="#374151" stroke-width="1.5" stroke-linecap="round" stroke-linejoin="round"/></svg>
<span class="a ft" style="left:1193px;top:775px;font-weight:normal;-webkit-text-stroke:.45px #1f2937;letter-spacing:.3px">1 - 20</span>
<svg class="a" style="left:1254px;top:775px" width="16" height="14" viewBox="0 0 16 14"><path d="M2.5 2v10M11 2.5L6.5 7l4.5 4.5" fill="none" stroke="#c4c8ce" stroke-width="1.4" stroke-linecap="round" stroke-linejoin="round"/></svg>
<svg class="a" style="left:1286px;top:775px" width="12" height="14" viewBox="0 0 12 14"><path d="M8 2.5L3.5 7 8 11.5" fill="none" stroke="#c4c8ce" stroke-width="1.4" stroke-linecap="round" stroke-linejoin="round"/></svg>
<svg class="a" style="left:1318px;top:775px" width="12" height="14" viewBox="0 0 12 14"><path d="M3.5 2.5L8 7l-4.5 4.5" fill="none" stroke="#374151" stroke-width="1.5" stroke-linecap="round" stroke-linejoin="round"/></svg>
<svg class="a" style="left:1348px;top:775px" width="16" height="14" viewBox="0 0 16 14"><path d="M3 2.5L7.5 7 3 11.5M12 2v10" fill="none" stroke="#374151" stroke-width="1.5" stroke-linecap="round" stroke-linejoin="round"/></svg>

<!-- right floating -->
<div class="a" style="left:1392px;top:318px;width:14px;height:32px;border-radius:6px 0 0 6px;background:#1570ef"></div>
<svg class="a" style="left:1394px;top:327px" width="10" height="14" viewBox="0 0 10 14"><path d="M7 2.5L3 7l4 4.5" fill="none" stroke="#fff" stroke-width="1.8" stroke-linecap="round" stroke-linejoin="round"/></svg>
<div class="a" style="left:1352px;top:350px;width:54px;height:156px;border-radius:10px 0 0 10px;background:#fff;box-shadow:0 0 6px rgba(0,0,0,0.08)"></div>
<div class="a" style="left:1360px;top:358px;width:40px;height:40px;border-radius:50%;background:linear-gradient(180deg,#f86a4a,#f04a2a)"></div>
<svg class="a" style="left:1366px;top:366px" width="28" height="28" viewBox="0 0 28 28"><path d="M13.6 4.3C14.4 9.6 16.4 12 22.6 13.3 16.4 14.6 14.4 17 13.6 22.3 12.8 17 10.8 14.6 4.6 13.3 10.8 12 12.8 9.6 13.6 4.3z" fill="#fff"/><path d="M20.5 3.2c.3 1.9 1 2.6 2.8 2.8-1.8.2-2.5.9-2.8 2.8-.3-1.9-1-2.6-2.8-2.8 1.8-.2 2.5-.9 2.8-2.8z" fill="#fff"/></svg>
<div class="a" style="left:1360px;top:408px;width:40px;height:40px;border-radius:50%;background:#1570d9"></div>
<svg class="a" style="left:1366px;top:414px" width="28" height="28" viewBox="0 0 28 28"><circle cx="11.3" cy="10.4" r="6.4" fill="#fff"/><path d="M6.8 14.2L5.2 18.6l4.6-2.2z" fill="#fff"/><circle cx="18" cy="17" r="6" fill="#1570d9"/><circle cx="18" cy="17" r="4.7" fill="#fff"/><path d="M20.8 20.2l2.6 3-4.4-1.4z" fill="#fff"/></svg>
<div class="a" style="left:1360px;top:457px;width:40px;height:40px;border-radius:50%;background:#1570d9"></div>
<svg class="a" style="left:1366px;top:463px" width="28" height="28" viewBox="0 0 28 28"><circle cx="14" cy="12.6" r="6.6" fill="#fff"/><path d="M11 16.5h6v2.6h-6z" fill="#fff"/><path d="M10.8 21.6q3.2 1.3 6.4 0" fill="none" stroke="#fff" stroke-width="1.3" stroke-linecap="round"/><path d="M14.9 8.6l-3 4.6h2.1l-.9 3.3 3.1-4.6h-2.1z" fill="#1570d9"/></svg>

</body></html>
